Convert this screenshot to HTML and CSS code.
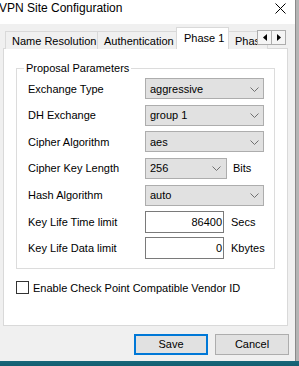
FILE: index.html
```html
<!DOCTYPE html>
<html>
<head>
<meta charset="utf-8">
<link rel="stylesheet" href="styles.css">
</head>
<body>
<div class="screen">
  <div class="window">
    <div class="titlebar">
      <span class="title">VPN Site Configuration</span>
      <svg class="close" width="11" height="11" viewBox="0 0 11 11"><path d="M0.5 0.5 L10.5 10.5 M10.5 0.5 L0.5 10.5" stroke="#000" stroke-width="1" fill="none"/></svg>
    </div>
    <div class="client">
      <div class="tabs">
        <div class="tab t1">Name Resolution</div>
        <div class="tab t2">Authentication</div>
        <div class="tab t3 active">Phase 1</div>
        <div class="tab t4">Phase 2</div>
        <div class="scroller">
          <div class="sbtn"><svg width="4" height="7" viewBox="0 0 4 7"><path d="M4 0 L0 3.5 L4 7 Z" fill="#000"/></svg></div>
          <div class="sbtn"><svg width="4" height="7" viewBox="0 0 4 7"><path d="M0 0 L4 3.5 L0 7 Z" fill="#000"/></svg></div>
        </div>
      </div>
      <div class="panel">
        <div class="group">
          <span class="legend">Proposal Parameters</span>
          <div class="rows">
            <div class="row"><span class="lbl">Exchange Type</span><div class="select wide"><span>aggressive</span><svg class="chev" width="9" height="5" viewBox="0 0 9 5"><path d="M0.5 0.5 L4.5 4.5 L8.5 0.5" stroke="#707070" fill="none"/></svg></div></div>
            <div class="row"><span class="lbl">DH Exchange</span><div class="select wide"><span>group 1</span><svg class="chev" width="9" height="5" viewBox="0 0 9 5"><path d="M0.5 0.5 L4.5 4.5 L8.5 0.5" stroke="#707070" fill="none"/></svg></div></div>
            <div class="row"><span class="lbl">Cipher Algorithm</span><div class="select wide"><span>aes</span><svg class="chev" width="9" height="5" viewBox="0 0 9 5"><path d="M0.5 0.5 L4.5 4.5 L8.5 0.5" stroke="#707070" fill="none"/></svg></div></div>
            <div class="row"><span class="lbl">Cipher Key Length</span><div class="select short"><span>256</span><svg class="chev" width="9" height="5" viewBox="0 0 9 5"><path d="M0.5 0.5 L4.5 4.5 L8.5 0.5" stroke="#707070" fill="none"/></svg></div><span class="unit u1">Bits</span></div>
            <div class="row"><span class="lbl">Hash Algorithm</span><div class="select wide"><span>auto</span><svg class="chev" width="9" height="5" viewBox="0 0 9 5"><path d="M0.5 0.5 L4.5 4.5 L8.5 0.5" stroke="#707070" fill="none"/></svg></div></div>
            <div class="row"><span class="lbl">Key Life Time limit</span><div class="input">86400</div><span class="unit">Secs</span></div>
            <div class="row"><span class="lbl">Key Life Data limit</span><div class="input">0</div><span class="unit">Kbytes</span></div>
          </div>
        </div>
        <div class="check"><span class="box"></span><span>Enable Check Point Compatible Vendor ID</span></div>
      </div>
      <div class="buttons">
        <div class="btn default">Save</div>
        <div class="btn">Cancel</div>
      </div>
    </div>
  </div>
</div>
</body>
</html>
```
FILE: styles.css
```css
* { box-sizing: border-box; }
html, body { margin: 0; padding: 0; }
body {
  width: 299px;
  height: 366px;
  overflow: hidden;
  font-family: "Liberation Sans", Arial, sans-serif;
  font-size: 11px;
  color: #000;
  background: linear-gradient(#b4b4b4 0, #b4b4b4 361px, #17677a 361px, #145e70 366px);
}
.screen { width: 299px; height: 366px; }
.window {
  width: 296px;
  height: 361px;
  background: #f0f0f0;
  border-right: 1px solid #8a8a8a;
  display: flex;
  flex-direction: column;
}
.titlebar {
  height: 24px;
  background: #fff;
  display: flex;
  justify-content: space-between;
  align-items: flex-start;
}
.title {
  font-size: 12px;
  line-height: 14px;
  margin-top: 1px;
  margin-left: -1px;
}
.close { margin-top: 3px; margin-right: 9px; }
.client {
  padding: 4px 7px 0 3px;
  display: flex;
  flex-direction: column;
}
.tabs {
  position: relative;
  display: flex;
  align-items: flex-end;
  height: 21px;
  padding-left: 2px;
  margin-bottom: -1px;
  z-index: 1;
}
.tab {
  height: 18px;
  border: 1px solid #d9d9d9;
  border-bottom: none;
  background: #f0f0f0;
  line-height: 16px;
  padding-top: 1px;
  white-space: nowrap;
  overflow: hidden;
  padding-left: 6px;
}
.t1 { width: 93px; }
.t2 { width: 80px; margin-left: -1px; }
.t3 { width: 53px; margin-left: -1px; }
.t4 { width: 40px; margin-left: -1px; }
.tab.active {
  height: 22px;
  background: #fff;
  padding-top: 2px;
  padding-left: 7px;
  position: relative;
  z-index: 2;
}
.scroller {
  position: absolute;
  left: 255px;
  top: 2px;
  display: flex;
  z-index: 3;
}
.sbtn {
  width: 15px;
  height: 15px;
  border: 1px solid #adadad;
  background: #f5f5f5;
  display: flex;
  align-items: center;
  justify-content: center;
  margin-left: -1px;
}
.panel {
  height: 278px;
  background: #fff;
  border: 1px solid #d9d9d9;
  padding: 19px 12px 0 12px;
}
.group {
  border: 1px solid #dcdcdc;
  height: 201px;
  padding: 0 0 0 11px;
}
.legend {
  display: block;
  width: fit-content;
  margin: -7px 0 0 -4px;
  padding: 0 2px;
  background: #fff;
  line-height: 13px;
}
.rows {
  margin-top: 3px;
  display: flex;
  flex-direction: column;
  gap: 5.66px;
}
.row {
  display: flex;
  align-items: center;
  height: 21px;
}
.lbl { width: 117px; }
.select {
  height: 21px;
  background: #e1e1e1;
  border: 1px solid #adadad;
  display: flex;
  align-items: center;
  justify-content: space-between;
  padding: 0 4px 0 4px;
}
.select.wide { width: 119px; }
.select.short { width: 82px; padding-right: 5px; }
.chev { margin-top: 1px; }
.input {
  width: 79px;
  height: 22px;
  background: #fff;
  border: 1px solid #7a7a7a;
  text-align: right;
  padding-right: 1px;
  line-height: 20px;
}
.unit { margin-left: 7px; }
.u1 { margin-left: 6px; }
.check {
  margin-top: 12px;
  display: flex;
  align-items: center;
  gap: 4px;
  height: 13px;
  margin-left: 0;
}
.box {
  width: 13px;
  height: 13px;
  border: 1px solid #333;
  background: #fff;
}
.buttons {
  margin-top: 8px;
  display: flex;
  justify-content: flex-end;
  gap: 7px;
  margin-right: -1px;
}
.btn {
  width: 74px;
  height: 21px;
  background: #e1e1e1;
  border: 1px solid #adadad;
  text-align: center;
  line-height: 19px;
}
.btn.default {
  border: 2px solid #0078d7;
  line-height: 17px;
}
```
